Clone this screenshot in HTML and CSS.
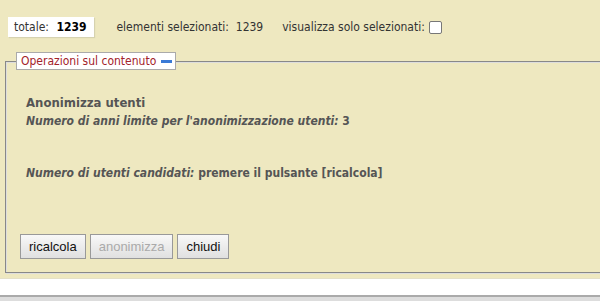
FILE: index.html
```html
<!DOCTYPE html>
<html>
<head>
<meta charset="utf-8">
<link rel="stylesheet" href="styles.css">
</head>
<body>
<div class="page">
  <div class="topbar">
    <div class="total">totale: <b>1239</b></div>
    <span class="info">elementi selezionati:&nbsp; 1239</span>
    <span class="info">visualizza solo selezionati: <span class="check"></span></span>
  </div>
  <fieldset class="ops">
    <legend class="legend">Operazioni sul contenuto <span class="minus"></span></legend>
    <div class="content">
      <div class="title">Anonimizza utenti</div>
      <div class="line"><i>Numero di anni limite per l'anonimizzazione utenti:</i> 3</div>
      <div class="line second"><i>Numero di utenti candidati:</i> premere il pulsante [ricalcola]</div>
      <div class="buttons">
        <button class="btn">ricalcola</button>
        <button class="btn" disabled>anonimizza</button>
        <button class="btn">chiudi</button>
      </div>
    </div>
  </fieldset>
</div>
<div class="footer"></div>
</body>
</html>
```
FILE: styles.css
```css
html, body { margin: 0; padding: 0; background: #fff; }
body { font-family: "DejaVu Sans Condensed", "DejaVu Sans", sans-serif; font-size: 12px; color: #333; }
.page {
  background: #eee8c0;
  height: 279px;
  padding-top: 17px;
  box-sizing: border-box;
  border-bottom: 1px solid #e4e0c8;
}
.topbar { display: flex; align-items: center; height: 20px; padding-left: 8px; }
.total {
  background: #fff;
  height: 20px;
  line-height: 20px;
  padding: 0 8px 0 6px;
  box-shadow: 1px 1px 1px #d6d2b0;
  margin-right: 22px;
}
.total b { margin-left: 4px; color: #000; }
.info { margin-right: 19px; display: flex; align-items: center; }
.check {
  display: inline-block; width: 11px; height: 11px;
  border: 1px solid #777; border-radius: 2px; background: #fff; margin-left: 4px;
}
.ops {
  margin: 15px 0 0 5px;
  width: 620px;
  border: 1px solid #888;
  border-right: none;
  box-shadow: inset 1px 1px 0 #ddd, 1px 1px 0 #ddd;
  padding: 0 0 13px 0;
  box-sizing: border-box;
}
.legend {
  background: #fff;
  color: #a3222a;
  border: 1px solid #aaa;
  padding: 1px 3px 1px 4px;
  margin-left: 10px;
  line-height: 14px;
}
.minus { display: inline-block; width: 11px; height: 3px; background: #3a7ad6; vertical-align: middle; margin-left: 1px; }
.content { padding: 24px 0 0 20px; }
.title, .line { font-weight: bold; font-size: 12px; line-height: 18px; color: #555; }
.title { font-size: 13px; }
.second { margin-top: 34px; }
.buttons { margin-top: 52px; display: flex; gap: 4px; margin-left: -6px; }
.btn {
  font-family: "Liberation Sans", Arial, sans-serif;
  font-size: 13px;
  height: 25px;
  padding: 0 8px;
  margin: 0;
  border: 1px solid #999;
  background: linear-gradient(#f8f8f8, #e0e0e0);
  color: #111;
}
.btn:disabled { color: #aaa; }
.footer { height: 6px; margin-top: 16px; border-top: 2px solid #aaa; background: #ddd; }
```
